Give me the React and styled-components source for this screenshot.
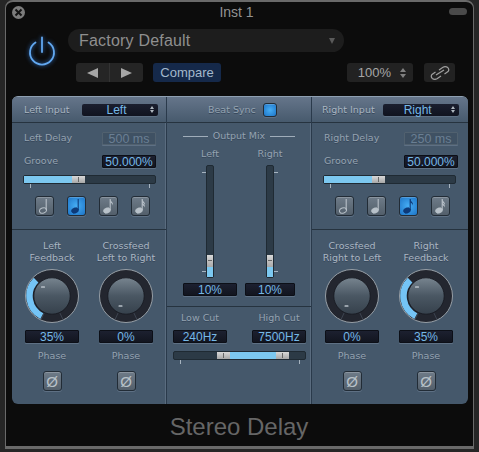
import React from "react";
import styled, { createGlobalStyle } from "styled-components";

const Global = createGlobalStyle`
	html, body { margin: 0; padding: 0; background: #262626; }
	* { box-sizing: border-box; }
`;

const labelFont = `"DejaVu Sans", sans-serif`;
const valueFont = `"Liberation Sans", sans-serif`;

const Page = styled.div`
	width: 479px;
	height: 452px;
	padding-left: 5px;
	overflow: hidden;
`;

const Window = styled.div`
	position: relative;
	width: 469px;
	height: 449px;
	background: #0c0c0c;
	border: 1px solid #6a6a6a;
	border-top-width: 2px;
	border-radius: 8px 8px 0 0;
	border-bottom: 3px solid #6a6a6a;
	font-family: ${valueFont};
`;

const TitleBar = styled.div`
	position: relative;
	height: 27px;
	padding-top: 3px;
	text-align: center;
	font-size: 14px;
	line-height: 15px;
	color: #939393;
	padding-right: 6px;
`;

const CloseDot = styled.div`
	position: absolute;
	left: 6px;
	top: 4px;
	width: 13px;
	height: 13px;
	border-radius: 50%;
	background: #7c7c7c;
	display: flex;
	align-items: center;
	justify-content: center;
`;

const ZoomPill = styled.div`
	position: absolute;
	right: 6px;
	top: 6px;
	width: 18px;
	height: 7px;
	border-radius: 4px;
	background: #4a4a4a;
`;

const Header = styled.div`
	display: grid;
	grid-template-columns: 62px 1fr;
	height: 67px;
`;

const PowerCell = styled.div`
	padding: 6px 0 0 20px;
`;

const HeaderBody = styled.div`
	display: flex;
	flex-direction: column;
`;

const PresetPill = styled.div`
	width: 276px;
	height: 23px;
	border-radius: 12px;
	background: #1d1d1d;
	display: flex;
	align-items: center;
	justify-content: space-between;
	padding: 0 9px 0 11px;
	font-size: 16px;
	letter-spacing: 0.2px;
	color: #8f8f8f;
`;

const PresetArrow = styled.div`
	width: 0;
	height: 0;
	border-left: 3.5px solid transparent;
	border-right: 3.5px solid transparent;
	border-top: 6px solid #5a5a5a;
`;

const Controls = styled.div`
	display: flex;
	align-items: stretch;
	height: 19px;
	margin: 11px 0 0 8px;
`;

const ArrowGroup = styled.div`
	display: flex;
	width: 67px;
	background: #252525;
	border-radius: 3px;
`;

const ArrowBtn = styled.div`
	flex: 1;
	display: flex;
	align-items: center;
	justify-content: center;
	& + & {
		border-left: 1px solid #333;
	}
`;

const Triangle = styled.div`
	width: 0;
	height: 0;
	border-top: 5px solid transparent;
	border-bottom: 5px solid transparent;
	${(p) =>
		p.$dir === "left"
			? "border-right: 11px solid #a6a6a6;"
			: "border-left: 11px solid #a6a6a6;"}
`;

const CompareBtn = styled.div`
	width: 68px;
	margin-left: 10px;
	border-radius: 3px;
	background: #15294a;
	color: #a4b8cc;
	font-size: 13px;
	line-height: 19px;
	text-align: center;
`;

const ZoomBox = styled.div`
	width: 66px;
	margin-left: 126px;
	border-radius: 3px;
	background: #222;
	color: #a6a6a6;
	font-size: 13px;
	display: flex;
	align-items: center;
	justify-content: flex-end;
	gap: 9px;
	padding-right: 7px;
`;

const Stepper = styled.div`
	display: flex;
	flex-direction: column;
	gap: 2px;
	&::before,
	&::after {
		content: "";
		width: 0;
		height: 0;
		border-left: 3px solid transparent;
		border-right: 3px solid transparent;
	}
	&::before {
		border-bottom: 4px solid ${(p) => p.$color || "#808080"};
	}
	&::after {
		border-top: 4px solid ${(p) => p.$color || "#808080"};
	}
`;

const LinkBtn = styled.div`
	width: 31px;
	margin-left: 11px;
	border-radius: 3px;
	background: #222;
	display: flex;
	align-items: center;
	justify-content: center;
`;

const Panel = styled.div`
	display: flex;
	width: 456px;
	height: 308px;
	margin-left: 6px;
	background: #45586b;
	border-radius: 6px;
	overflow: hidden;
	border-top: 1px solid #8fa0b2;
`;

const Column = styled.div`
	display: flex;
	flex-direction: column;
	width: ${(p) => p.$width}px;
	${(p) => p.$bordered && "border-right: 1px solid #2a3a4b; box-shadow: inset -1px 0 0 #5a6c7f;"}
`;

const ColumnHeader = styled.div`
	height: 26px;
	flex: none;
	display: flex;
	align-items: center;
	background: linear-gradient(#65758a, #475a6d);
	border-bottom: 1px solid #26333f;
	padding-left: ${(p) => p.$pad}px;
	${(p) => p.$center && "gap: 7px;"}
`;

const Label = styled.div`
	font-family: ${labelFont};
	font-size: 9.5px;
	line-height: 12px;
	color: ${(p) => (p.$dim ? "#95a3b1" : "#aab6c2")};
	text-shadow: 0 1px 0 #35465a;
	white-space: nowrap;
`;

const InputSelect = styled.div`
	width: 76px;
	height: 12px;
	margin-left: ${(p) => p.$gap}px;
	background: linear-gradient(#1b1f2f, #10131f);
	border-radius: 2px;
	box-shadow: 0 1px 0 #5e7084;
	display: flex;
	align-items: center;
	justify-content: center;
	position: relative;
	color: #75b8e6;
	font-size: 12px;
	padding-right: 6px;
`;

const SelectStepper = styled(Stepper)`
	position: absolute;
	right: 4px;
	top: 2px;
	gap: 1px;
	&::before {
		border-width: 0 2px 3px;
	}
	&::after {
		border-width: 3px 2px 0;
	}
`;

const DelaySection = styled.div`
	height: 107px;
	flex: none;
	border-bottom: 1px solid #26333f;
	padding: 9px 10px 0 11px;
	display: flex;
	flex-direction: column;
`;

const ParamRow = styled.div`
	display: flex;
	align-items: center;
	justify-content: space-between;
	height: 12px;
	margin-bottom: 11px;
	padding-left: 1px;
`;

const ValueField = styled.div`
	width: ${(p) => p.$width || 54}px;
	height: 13px;
	flex: none;
	background: ${(p) => (p.$disabled ? "#3f5163" : "linear-gradient(#1c2030, #12151f)")};
	border: 1px solid ${(p) => (p.$disabled ? "#51616f" : "#0c0f17")};
	border-radius: 1px;
	box-shadow: 0 1px 0 #5e7084;
	color: ${(p) => (p.$disabled ? "#6a7f93" : "#75b8e6")};
	font-size: ${(p) => (p.$disabled ? 12.5 : 12)}px;
	line-height: 12px;
	text-align: center;
`;

const SliderTrack = styled.div`
	position: relative;
	width: 133px;
	height: 9px;
	flex: none;
	margin-top: -3px;
	background: #2c3a46;
	border: 1px solid #1f2a33;
	border-radius: 2px;
`;

const SliderFill = styled.div`
	position: absolute;
	top: 0;
	bottom: 0;
	background: #7cc8f0;
`;

const SliderThumb = styled.div`
	position: absolute;
	top: 0;
	bottom: 0;
	width: 13px;
	background: linear-gradient(#d8d8d8, #a8a8a8);
	&::after {
		content: "";
		position: absolute;
		left: 6px;
		top: 1px;
		bottom: 1px;
		width: 1px;
		background: #666;
	}
`;

const SliderTick = styled.div`
	position: absolute;
	top: 8px;
	width: 1px;
	height: 4px;
	background: #a6b3bf;
`;

const NoteRow = styled.div`
	display: flex;
	gap: 13px;
	margin: 12px 0 0 12px;
`;

const SquareBtn = styled.div`
	width: ${(p) => p.$size || 19}px;
	height: ${(p) => p.$size || 20}px;
	flex: none;
	display: flex;
	align-items: center;
	justify-content: center;
	border: 1px solid #222c36;
	border-radius: 3px;
	background: ${(p) =>
		p.$on
			? "radial-gradient(circle, #46aef5, #1e74c6)"
			: "linear-gradient(#6e7b88, #535f6b)"};
	box-shadow: inset 0 1px 0 rgba(255, 255, 255, 0.2), 0 1px 0 #5e7084;
	color: #b8c1c9;
	font-size: 15px;
	font-family: ${valueFont};
`;

const KnobArea = styled.div`
	flex: 1;
	display: flex;
	padding-left: 3px;
`;

const KnobCell = styled.div`
	width: 74px;
	padding-top: 10px;
	display: flex;
	flex-direction: column;
	align-items: center;
`;

const KnobTitle = styled(Label)`
	height: 24px;
	text-align: center;
`;

const KnobWrap = styled.div`
	width: 54px;
	height: 54px;
	margin: 5px 0 7px;
`;

const PhaseLabel = styled(Label)`
	margin: 7px 0 9px;
`;

const MixSection = styled.div`
	height: 184px;
	flex: none;
	border-bottom: 1px solid #26333f;
	padding-top: 7px;
`;

const MixTitle = styled.div`
	display: flex;
	align-items: center;
	gap: 5px;
	padding: 0 16px;
`;

const Rule = styled.div`
	flex: 1;
	height: 1px;
	background: #a0adba;
`;

const FaderRow = styled.div`
	display: flex;
	padding: 6px 0 0 16px;
`;

const FaderCol = styled.div`
	width: ${(p) => p.$width}px;
	margin-right: ${(p) => p.$gap || 0}px;
	display: flex;
	flex-direction: column;
	align-items: center;
`;

const FaderTrack = styled.div`
	position: relative;
	width: 8px;
	height: 113px;
	margin: 5px 0;
	background: #2c3a46;
	border: 1px solid #1f2a33;
	border-radius: 2px;
`;

const FaderFill = styled.div`
	position: absolute;
	left: 0;
	right: 0;
	bottom: 0;
	height: 10px;
	background: #7cc8f0;
`;

const FaderThumb = styled.div`
	position: absolute;
	left: 0;
	right: 0;
	bottom: 10px;
	height: 12px;
	background: linear-gradient(#d8d8d8, #a8a8a8);
	&::after {
		content: "";
		position: absolute;
		left: 1px;
		right: 1px;
		top: 5px;
		height: 1px;
		background: #666;
	}
`;

const FaderTick = styled.div`
	position: absolute;
	width: 4px;
	height: 1px;
	background: #a6b3bf;
	top: ${(p) => p.$top}px;
	${(p) => (p.$side === "left" ? "left: -5px;" : "right: -5px;")}
`;

const CutSection = styled.div`
	flex: 1;
	padding: 5px 5px 0 6px;
`;

const CutRow = styled.div`
	display: flex;
	justify-content: space-between;
`;

const CutCell = styled.div`
	width: 54px;
	display: flex;
	flex-direction: column;
	align-items: center;
	gap: 6px;
`;

const RangeTrack = styled(SliderTrack)`
	margin-top: 8px;
`;

const Footer = styled.div`
	height: 44px;
	text-align: center;
	font-size: 24px;
	line-height: 46px;
	color: #666;
	padding-right: 1px;
`;

const Power = () => (
	<svg width="32" height="34" viewBox="0 0 32 34" fill="none" style={{ filter: "drop-shadow(0 0 2px #2f72c8)" }}>
		<path d="M9.5 7.5 A12 12 0 1 0 22.5 7.5" stroke="#62a8f0" strokeWidth="1.8" strokeLinecap="round" />
		<path d="M16 2.5 V17" stroke="#62a8f0" strokeWidth="1.8" strokeLinecap="round" />
	</svg>
);

const ChainIcon = () => (
	<svg width="20" height="14" viewBox="0 0 20 14" fill="none" stroke="#a0a0a0" strokeWidth="1.2">
		<path d="M9 4 L13 1.2 Q15.5 0 17.8 1.6 Q19.6 3.6 18 5.6 L14.5 8" />
		<path d="M11 10 L7 12.8 Q4.5 14 2.2 12.4 Q0.4 10.4 2 8.4 L5.5 6" />
		<path d="M6 9 L14 4" />
	</svg>
);

// 0 half, 1 quarter, 2 eighth, 3 sixteenth
const Note = ({ kind, color }) => (
	<svg width="13" height="16" viewBox="0 0 13 16" fill="none">
		<ellipse
			cx="5"
			cy="12.5"
			rx="3.6"
			ry="2.6"
			transform="rotate(-20 5 12.5)"
			fill={kind === 0 ? "none" : color}
			stroke={color}
			strokeWidth={kind === 0 ? 1 : 0.6}
		/>
		<path d="M8.2 12 V1" stroke={color} strokeWidth="1.1" />
		{kind >= 2 && <path d="M8.2 1 C8.6 3.5 11.5 4 11 7.5 C10.5 5.5 9.5 5 8.2 4.5 Z" fill={color} />}
		{kind === 3 && <path d="M8.2 4 C8.6 6 11.5 6.5 11 9.5 C10.5 8 9.5 7.5 8.2 7 Z" fill={color} />}
	</svg>
);

const polar = (r, deg) => {
	const a = ((deg - 90) * Math.PI) / 180;
	return [27 + r * Math.cos(a), 27 + r * Math.sin(a)];
};

const Knob = ({ id, dash, arc }) => {
	const [sx, sy] = polar(22.5, 207);
	const [ex, ey] = polar(22.5, 315);
	const [n1x, n1y] = polar(18, 205);
	const [n2x, n2y] = polar(26, 205);
	const [n3x, n3y] = polar(18, 155);
	const [n4x, n4y] = polar(26, 155);
	return (
		<svg width="54" height="54" viewBox="0 0 54 54" fill="none">
			<defs>
				<linearGradient id={id} x1="0" y1="0" x2="0" y2="1">
					<stop offset="0" stopColor="#77848f" />
					<stop offset="0.5" stopColor="#4a5763" />
					<stop offset="1" stopColor="#36414c" />
				</linearGradient>
			</defs>
			<circle cx="27" cy="27" r="26.5" fill="#23262f" stroke="#a2a9b0" strokeWidth="0.9" />
			<path d={`M${n1x} ${n1y} L${n2x} ${n2y} M${n3x} ${n3y} L${n4x} ${n4y}`} stroke="#3d4450" strokeWidth="1" />
			{arc && (
				<path
					d={`M${sx} ${sy} A22.5 22.5 0 0 1 ${ex} ${ey}`}
					stroke="#74c4f6"
					strokeWidth="6.5"
				/>
			)}
			<circle cx="27" cy="27" r="18.2" fill={`url(#${id})`} stroke="#15181f" strokeWidth="0.8" />
			<rect x={dash[0] - 2} y={dash[1] - 0.8} width="4" height="1.6" rx="0.6" fill="#b8c0c8" />
		</svg>
	);
};

const knobOn = { dash: [18, 18], arc: true };
const knobOff = { dash: [21.5, 37], arc: false };

const KnobUnit = ({ id, title, value, on }) => (
	<KnobCell>
		<KnobTitle>{title}</KnobTitle>
		<KnobWrap>
			<Knob id={id} {...(on ? knobOn : knobOff)} />
		</KnobWrap>
		<ValueField>{value}</ValueField>
		<PhaseLabel $dim>Phase</PhaseLabel>
		<SquareBtn>Ø</SquareBtn>
	</KnobCell>
);

const Channel = ({ side, name, delay, activeNote, width, bordered, pad, gap }) => {
	const knobs = [
		<KnobUnit
			key="fb"
			id={`fb-${side}`}
			on
			value="35%"
			title={
				<>
					{name}
					<br />
					Feedback
				</>
			}
		/>,
		<KnobUnit
			key="cf"
			id={`cf-${side}`}
			value="0%"
			title={
				<>
					Crossfeed
					<br />
					{name === "Left" ? "Left to Right" : "Right to Left"}
				</>
			}
		/>,
	];
	return (
		<Column $width={width} $bordered={bordered}>
			<ColumnHeader $pad={pad}>
				<Label>{name} Input</Label>
				<InputSelect $gap={gap}>
					{name}
					<SelectStepper $color="#b0b8c0" />
				</InputSelect>
			</ColumnHeader>
			<DelaySection>
				<ParamRow>
					<Label $dim>{name} Delay</Label>
					<ValueField $disabled>{delay}</ValueField>
				</ParamRow>
				<ParamRow>
					<Label $dim>Groove</Label>
					<ValueField>50.000%</ValueField>
				</ParamRow>
				<SliderTrack>
					<SliderFill style={{ left: 0, width: 48 }} />
					<SliderThumb style={{ left: 48 }} />
					<SliderTick style={{ left: 6 }} />
					<SliderTick style={{ left: 125 }} />
				</SliderTrack>
				<NoteRow>
					{[0, 1, 2, 3].map((n) => (
						<SquareBtn key={n} $on={n === activeNote}>
							<Note kind={n} color={n === activeNote ? "#0e3a78" : "#b8c1c9"} />
						</SquareBtn>
					))}
				</NoteRow>
			</DelaySection>
			<KnobArea>{side === "left" ? knobs : [knobs[1], knobs[0]]}</KnobArea>
		</Column>
	);
};

const Fader = ({ name, width, gap, tickSide }) => (
	<FaderCol $width={width} $gap={gap}>
		<Label $dim>{name}</Label>
		<FaderTrack>
			<FaderFill />
			<FaderThumb />
			<FaderTick $side={tickSide} $top={6} />
			<FaderTick $side={tickSide} $top={105} />
		</FaderTrack>
		<ValueField $width={width}>10%</ValueField>
	</FaderCol>
);

export default function App() {
	return (
		<Page>
			<Global />
			<Window>
				<TitleBar>
					<CloseDot>
						<svg width="9" height="9" viewBox="0 0 9 9" stroke="#141414" strokeWidth="2">
							<path d="M1.5 1.5 L7.5 7.5 M7.5 1.5 L1.5 7.5" />
						</svg>
					</CloseDot>
					Inst 1
					<ZoomPill />
				</TitleBar>
				<Header>
					<PowerCell>
						<Power />
					</PowerCell>
					<HeaderBody>
						<PresetPill>
							Factory Default
							<PresetArrow />
						</PresetPill>
						<Controls>
							<ArrowGroup>
								<ArrowBtn>
									<Triangle $dir="left" />
								</ArrowBtn>
								<ArrowBtn>
									<Triangle $dir="right" />
								</ArrowBtn>
							</ArrowGroup>
							<CompareBtn>Compare</CompareBtn>
							<ZoomBox>
								100%
								<Stepper />
							</ZoomBox>
							<LinkBtn>
								<ChainIcon />
							</LinkBtn>
						</Controls>
					</HeaderBody>
				</Header>
				<Panel>
					<Channel side="left" name="Left" delay="500 ms" activeNote={1} width={155} bordered pad={12} gap={12} />
					<Column $width={145} $bordered>
						<ColumnHeader $center $pad={41}>
							<Label $dim>Beat Sync</Label>
							<SquareBtn $on $size={14} />
						</ColumnHeader>
						<MixSection>
							<MixTitle>
								<Rule />
								<Label $dim>Output Mix</Label>
								<Rule />
							</MixTitle>
							<FaderRow>
								<Fader name="Left" width={54} gap={8} tickSide="left" />
								<Fader name="Right" width={50} tickSide="right" />
							</FaderRow>
						</MixSection>
						<CutSection>
							<CutRow>
								<CutCell>
									<Label $dim>Low Cut</Label>
									<ValueField>240Hz</ValueField>
								</CutCell>
								<CutCell>
									<Label $dim>High Cut</Label>
									<ValueField>7500Hz</ValueField>
								</CutCell>
							</CutRow>
							<RangeTrack>
								<SliderFill style={{ left: 56, width: 46 }} />
								<SliderThumb style={{ left: 43 }} />
								<SliderThumb style={{ left: 102 }} />
								<SliderTick style={{ left: 6 }} />
								<SliderTick style={{ left: 125 }} />
							</RangeTrack>
						</CutSection>
					</Column>
					<Channel side="right" name="Right" delay="250 ms" activeNote={2} width={156} pad={10} gap={8} />
				</Panel>
				<Footer>Stereo Delay</Footer>
			</Window>
		</Page>
	);
}
